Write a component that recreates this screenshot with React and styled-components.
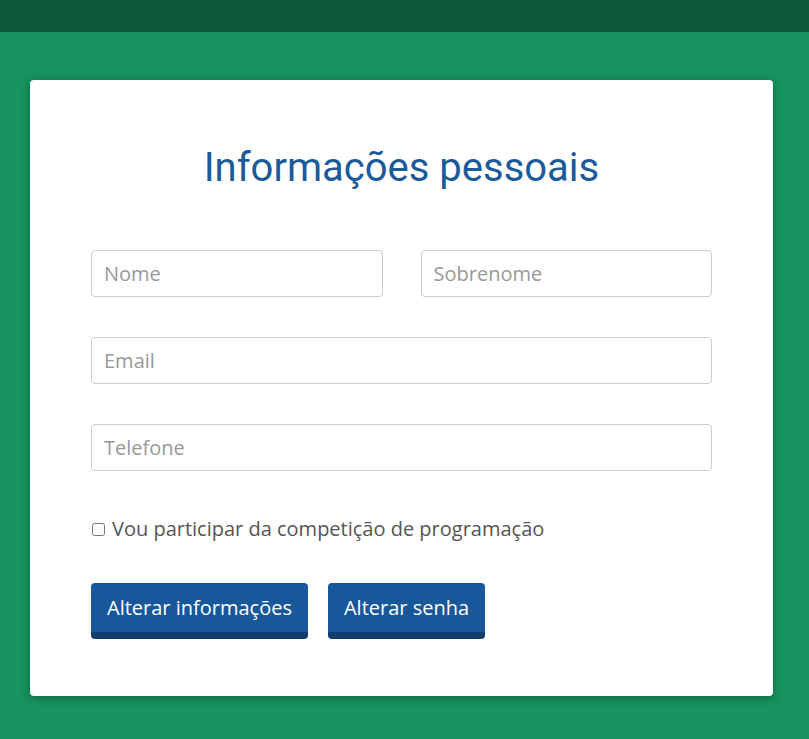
import React from "react";
import styled, { createGlobalStyle } from "styled-components";

const GlobalStyle = createGlobalStyle`
	html, body {
		margin: 0;
		padding: 0;
		background: #17935d;
		font-family: "Open Sans", "Liberation Sans", sans-serif;
	}
	* {
		box-sizing: border-box;
	}
`;

const Page = styled.div`
	min-height: 739px;
	background: #17935d;
	display: flex;
	flex-direction: column;
`;
const TopBar = styled.div`
	height: 32px;
	background: #0b5739;
`;
const Main = styled.div`
	padding: 48px 36px 43px 30px;
`;
const Card = styled.div`
	background: #fff;
	border-radius: 4px;
	box-shadow: 0 2px 8px rgba(0, 0, 0, 0.3);
	padding: 60px 61px 56px;
	height: 616px;
`;
const Title = styled.h1`
	margin: 0 0 54px;
	text-align: center;
	font-family: Roboto, "Liberation Sans", sans-serif;
	font-weight: 400;
	font-size: 40px;
	line-height: 56px;
	color: #1c5a9a;
`;
const Row = styled.div`
	display: grid;
	grid-template-columns: ${(props) => props.cols || "1fr"};
	column-gap: 38px;
	margin-bottom: ${(props) => props.mb || "40px"};
`;
const Input = styled.input`
	width: 100%;
	height: 47px;
	padding: 0 12px;
	border: 1px solid #ccc;
	border-radius: 4px;
	font-family: "Open Sans", "Liberation Sans", sans-serif;
	font-size: 20px;
	color: #555;
	outline: none;
	&::placeholder {
		color: #999;
	}
`;
const CheckLabel = styled.label`
	display: flex;
	align-items: center;
	gap: 7px;
	margin: 0 0 41px;
	font-size: 20px;
	color: #555;
	line-height: 26px;
	input {
		margin: 0 0 0 1px;
		width: 13px;
		height: 13px;
	}
`;
const Buttons = styled.div`
	display: flex;
	gap: 20px;
`;
const Button = styled.button`
	height: 56px;
	padding: 0 16px;
	background: #19579b;
	border: none;
	border-bottom: 7px solid #123e6e;
	border-radius: 4px;
	color: #fff;
	font-family: "Open Sans", "Liberation Sans", sans-serif;
	font-size: 20px;
	cursor: pointer;
`;

const App = () => {
	return (
		<Page>
			<GlobalStyle />
			<TopBar />
			<Main>
				<Card>
					<Title>Informações pessoais</Title>
					<Row cols="1fr 1fr">
						<Input placeholder="Nome" />
						<Input placeholder="Sobrenome" />
					</Row>
					<Row>
						<Input placeholder="Email" />
					</Row>
					<Row mb="45px">
						<Input placeholder="Telefone" />
					</Row>
					<CheckLabel>
						<input type="checkbox" />
						Vou participar da competição de programação
					</CheckLabel>
					<Buttons>
						<Button>Alterar informações</Button>
						<Button>Alterar senha</Button>
					</Buttons>
				</Card>
			</Main>
		</Page>
	);
};

export default App;
